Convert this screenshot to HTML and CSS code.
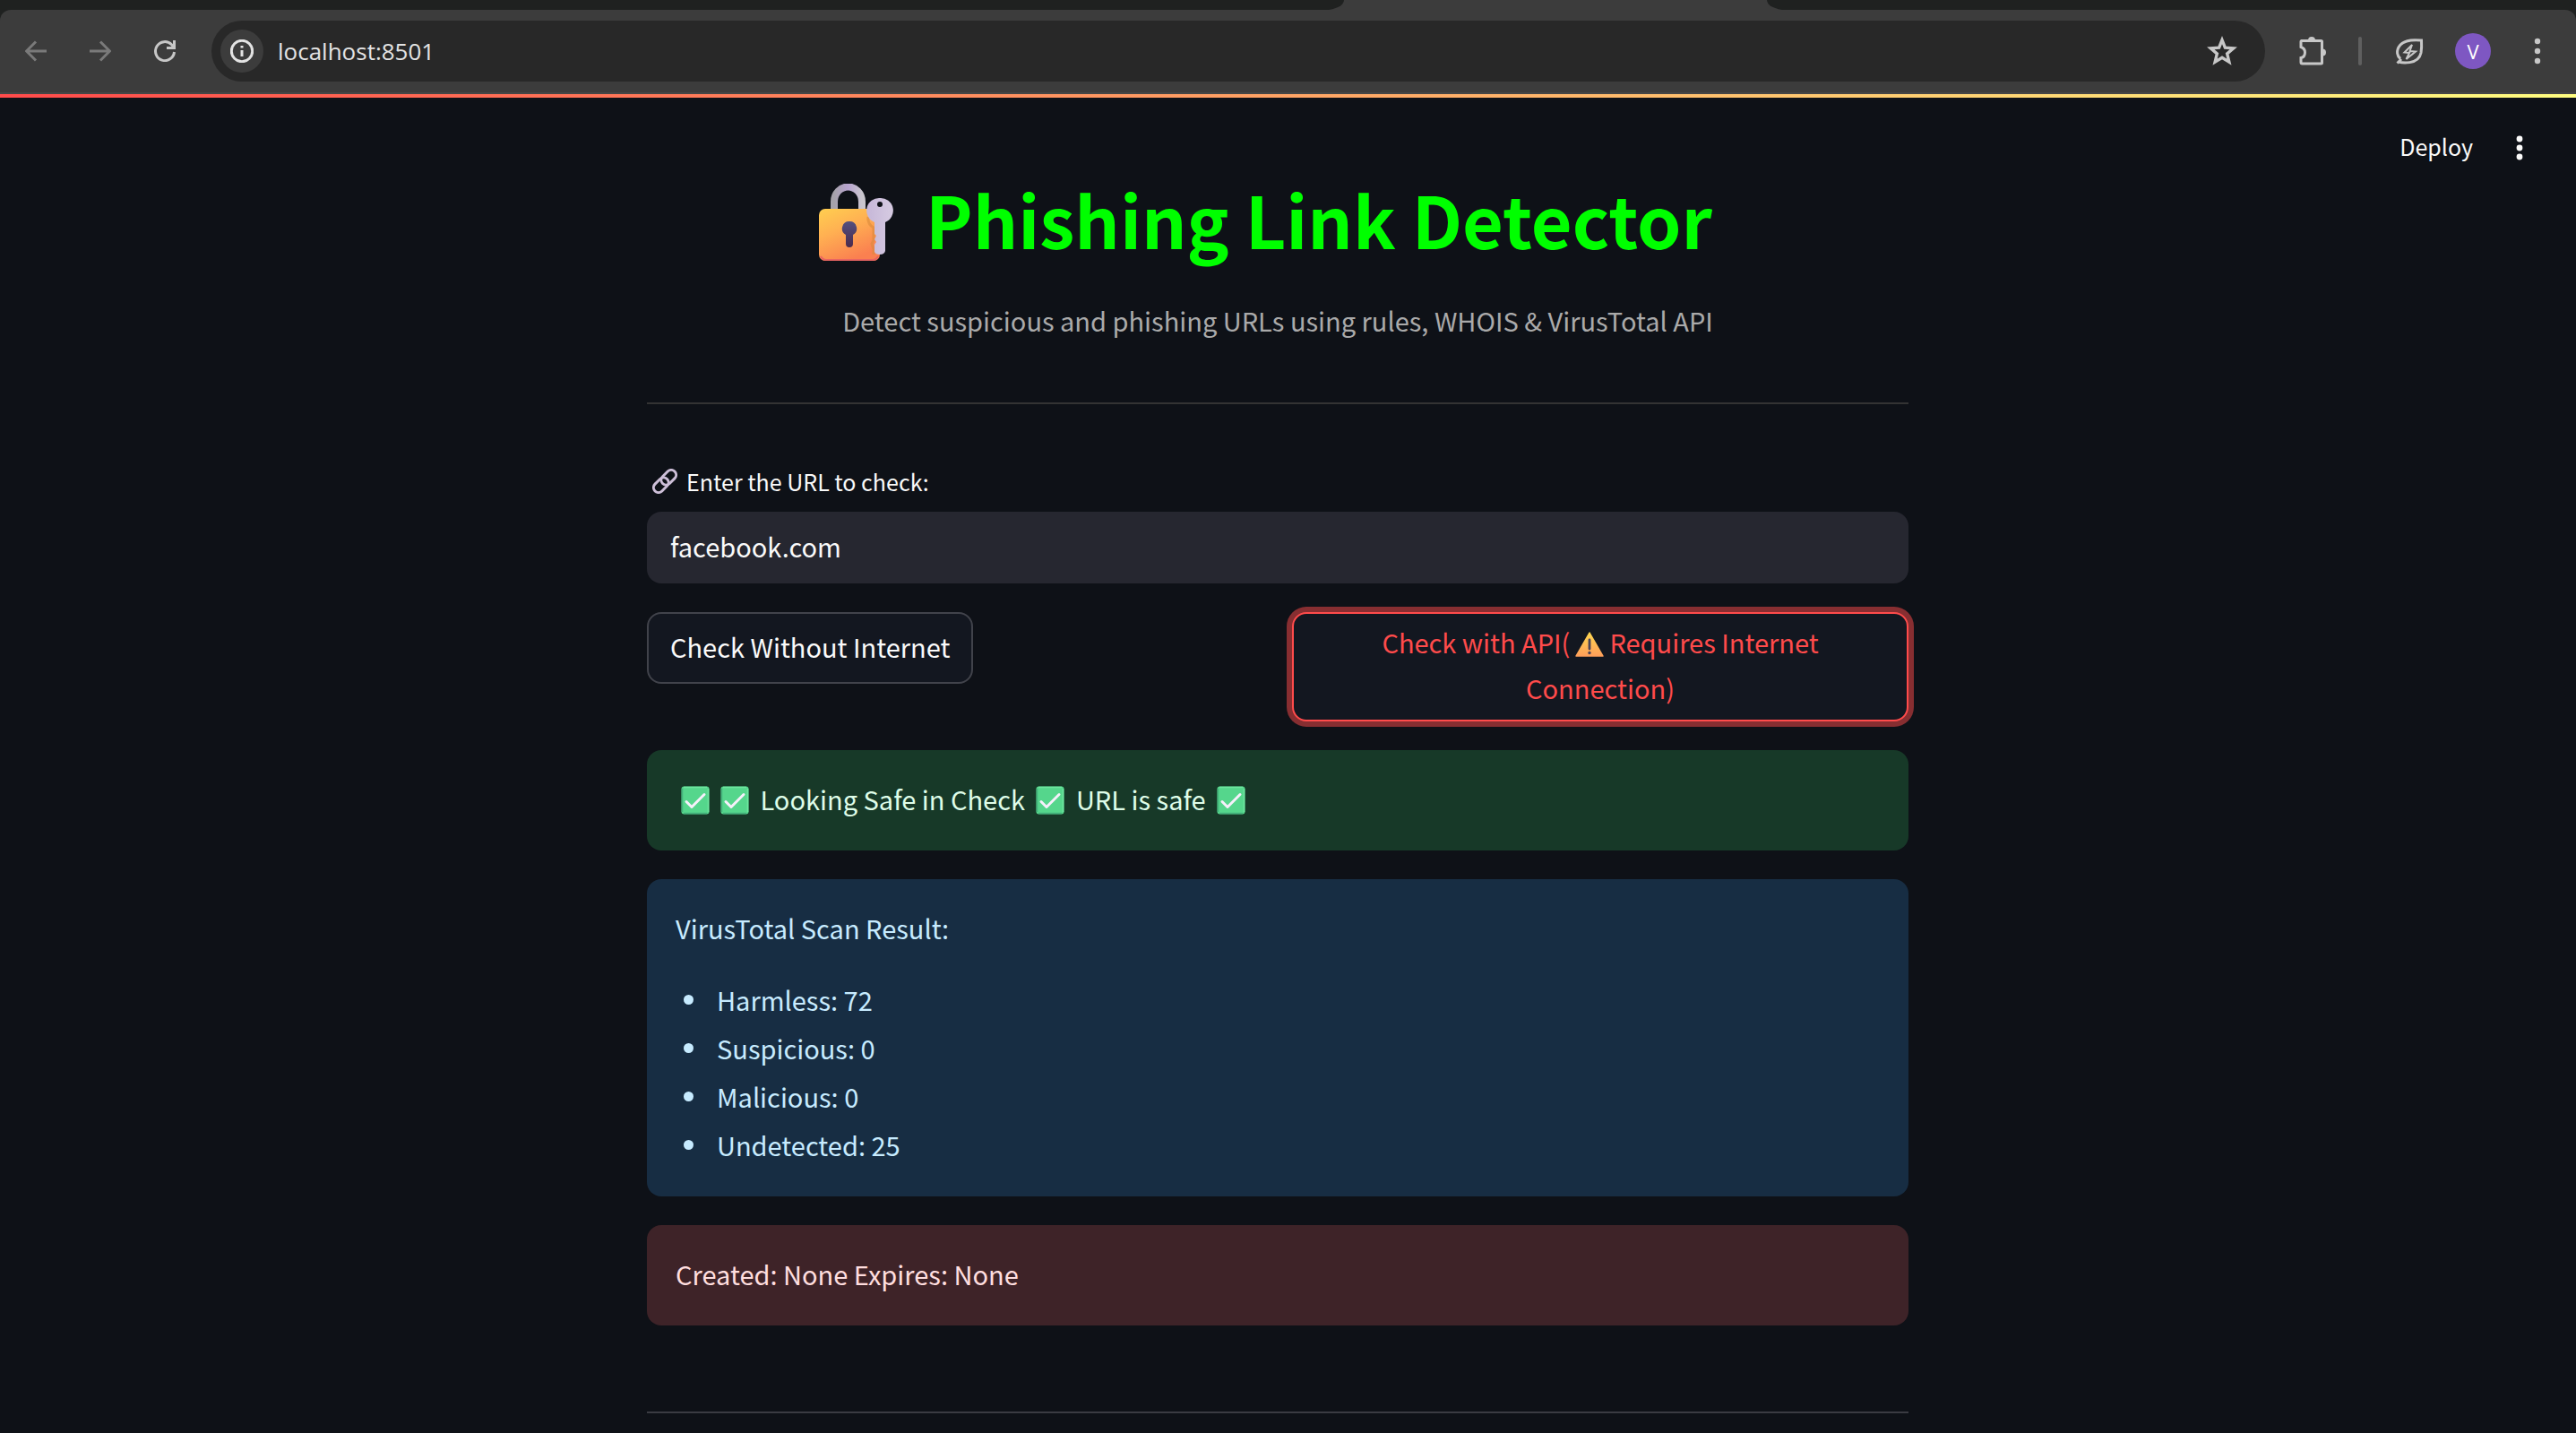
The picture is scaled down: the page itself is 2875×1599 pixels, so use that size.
FILE: index.html
```html
<!DOCTYPE html>
<html lang="en">
<head>
<meta charset="utf-8">
<title>Phishing Link Detector</title>
<link rel="stylesheet" href="styles.css">
</head>
<body>
<svg class="defs" aria-hidden="true">
  <defs>
    <linearGradient id="gold" x1="0" y1="0" x2="0.5" y2="1"><stop offset="0" stop-color="#ffcf50"/><stop offset="0.45" stop-color="#ffb052"/><stop offset="1" stop-color="#fa8050"/></linearGradient>
    <linearGradient id="steel" x1="0" y1="0" x2="1" y2="0"><stop offset="0" stop-color="#a6a2aa"/><stop offset="0.5" stop-color="#b7a3cf"/><stop offset="1" stop-color="#c9c6cd"/></linearGradient>
    <linearGradient id="hole" x1="0" y1="0" x2="0" y2="1"><stop offset="0" stop-color="#54507f"/><stop offset="1" stop-color="#4a2a4c"/></linearGradient>
    <linearGradient id="alert" x1="0" y1="0" x2="0" y2="1"><stop offset="0" stop-color="#ffd750"/><stop offset="1" stop-color="#ff9f5a"/></linearGradient>
    <linearGradient id="key" x1="0" y1="0" x2="1" y2="0"><stop offset="0" stop-color="#c6b7d8"/><stop offset="1" stop-color="#d6cbe2"/></linearGradient>
    <symbol id="check" viewBox="0 0 32 32">
      <rect x="0.500" y="0.500" width="31" height="31" rx="3" fill="#55d68c"/>
      <path d="M3 1.500H29M30.500 3V29" stroke="#6fe6a0" stroke-width="1.500" fill="none"/>
      <path d="M1.500 3V29M3 30.500H29" stroke="#44b27c" stroke-width="1.500" fill="none"/>
      <path d="M6 17.500L12 23.500L26 9.500" stroke="#f6f0fb" stroke-width="3" fill="none" stroke-linecap="round" stroke-linejoin="round"/>
    </symbol>
  </defs>
</svg>

<header class="browser">
  <div class="tabstrip"><span class="tabs-left"></span><span class="tab-active"></span><span class="tabs-right"></span></div>
  <div class="toolbar">
    <nav class="nav" aria-label="Navigation">
      <button class="icon-btn dim" aria-label="Back"><svg viewBox="0 0 24 24"><path d="M24 12H3M12 1.500L1.500 12L12 22.500"/></svg></button>
      <button class="icon-btn dim" aria-label="Forward"><svg viewBox="0 0 24 24"><path d="M0 12H21M12 1.500L22.500 12L12 22.500"/></svg></button>
      <button class="icon-btn" aria-label="Reload"><svg viewBox="0 0 24 24"><path d="M22.500 13A10.500 10.500 0 1 1 19.500 4.700L22 7.500M22.500 0V8.500H14"/></svg></button>
    </nav>
    <div class="omnibox">
      <button class="site-info" aria-label="Site information"><svg viewBox="0 0 26 26"><circle cx="13" cy="13" r="11.700"/><path d="M13 12V19M13 7V9.500"/></svg></button>
      <input class="address" type="text" value="localhost:8501" aria-label="Address">
      <button class="icon-btn star" aria-label="Bookmark"><svg viewBox="0 0 32 32"><path d="M16 5L19 12.600L27.300 13.200L21 18.600L23 26.800L16 22.500L9 26.800L11 18.600L4.700 13.200L13 12.600Z"/></svg></button>
    </div>
    <div class="actions">
      <button class="icon-btn" aria-label="Extensions"><svg viewBox="0 0 34 34"><path d="M4 5.500H26.500Q27.500 5.500 27.500 6.500V30Q27.500 31 26.500 31H5.500Q4 31 4 29.500V24.500C7 24 8.500 21.500 8.500 18.500S7 13.500 4 12.500V6.500Q4 5.500 5 5.500Z"/><path class="solid" d="M12 5A4 4 0 0 1 20 5ZM28 14.500A4 4 0 0 1 28 22.500Z"/></svg></button>
      <span class="sep"></span>
      <button class="icon-btn" aria-label="Energy saver"><svg viewBox="0 0 34 34"><path d="M5 29C8 30 27 33 30 19Q31 13 30.500 5C24 4.500 13 3.500 7 10C1 17 4 23 7 25.500M3.500 30.500L8 26"/><path class="thin" d="M20 10L11.500 18.500L17 19L13.500 26L24 17.500L17.500 17Z"/></svg></button>
      <button class="avatar" aria-label="Profile">V</button>
      <button class="icon-btn menu" aria-label="Browser menu"><svg viewBox="0 0 8 30"><circle cx="4" cy="4" r="3.200"/><circle cx="4" cy="15" r="3.200"/><circle cx="4" cy="26" r="3.200"/></svg></button>
    </div>
  </div>
</header>

<div class="app">
  <div class="decoration"></div>
  <div class="app-bar">
    <button class="deploy">Deploy</button>
    <button class="app-menu" aria-label="App menu"><svg viewBox="0 0 8 28"><circle cx="4" cy="4" r="3.400"/><circle cx="4" cy="14" r="3.400"/><circle cx="4" cy="24" r="3.400"/></svg></button>
  </div>

  <div class="scroller">
    <main class="content">
      <h1 class="title">
        <svg class="lock" viewBox="0 0 84 88" role="img" aria-label="Locked with key">
          <path d="M18 36V20A15 16 0 0 1 49 20V36" fill="none" stroke="url(#steel)" stroke-width="8"/>
          <rect x="1" y="28" width="68" height="58" rx="7" fill="url(#gold)"/>
          <path d="M3 81Q5 85 9 85H61Q65 85 67 81" fill="none" stroke="#e96562" stroke-width="2"/>
          <path d="M35 42A8 8 0 0 0 31 57V67A4 4 0 0 0 39 67V57A8 8 0 0 0 35 42Z" fill="url(#hole)"/>
          <path d="M56 37Q55 45 62 49V63L60 67L62 73V79" fill="none" stroke="#d98a3c" stroke-width="3" opacity="0.600"/>
          <path fill-rule="evenodd" d="M69 16A14 14 0 0 0 63 43V56L65 58L63 62L65 65L63 68V76Q64 79 69 79Q74 79 75 75V43A14 14 0 0 0 69 16ZM69 20A3 3 0 1 1 69 26A3 3 0 0 1 69 20Z" fill="url(#key)"/>
        </svg>
        <span>Phishing Link Detector</span>
      </h1>
      <p class="subtitle">Detect suspicious and phishing URLs using rules, WHOIS &amp; VirusTotal API</p>
      <hr class="rule">

      <form class="form">
        <label class="field-label" for="url">
          <svg class="link-icon" viewBox="0 0 28 28" aria-hidden="true"><g fill="none" stroke="#cdbfd8" stroke-width="3" transform="rotate(-45 14 14)"><rect x="-1.500" y="8.500" width="19" height="11" rx="5.500"/><rect x="10.500" y="8.500" width="19" height="11" rx="5.500"/></g></svg>
          <span>Enter the URL to check:</span>
        </label>
        <input class="field" id="url" type="text" value="facebook.com">
        <div class="columns">
          <div><button class="btn" type="button">Check Without Internet</button></div>
          <div><button class="btn btn-focus" type="button">Check with API(<svg class="warn" viewBox="0 0 32 28" role="img" aria-label="Warning"><path d="M16 1L31 27H1Z" fill="url(#alert)" stroke="url(#alert)" stroke-width="1.500" stroke-linejoin="round"/><path d="M16 9V19" stroke="#4a4358" stroke-width="2.800" stroke-linecap="round"/><circle cx="16" cy="23.500" r="1.700" fill="#4a4358"/></svg>Requires Internet Connection)</button></div>
        </div>
      </form>

      <section class="alert success" role="status">
        <svg class="tick" role="img" aria-label="OK"><use href="#check"/></svg><svg class="tick" role="img" aria-label="OK"><use href="#check"/></svg> Looking Safe in Check <svg class="tick" role="img" aria-label="OK"><use href="#check"/></svg> URL is safe <svg class="tick" role="img" aria-label="OK"><use href="#check"/></svg>
      </section>
      <section class="alert info">
        <p>VirusTotal Scan Result:</p>
        <ul class="results">
          <li>Harmless: 72</li>
          <li>Suspicious: 0</li>
          <li>Malicious: 0</li>
          <li>Undetected: 25</li>
        </ul>
      </section>
      <section class="alert error">Created: None Expires: None</section>
      <hr class="rule rule-end">
    </main>
  </div>
</div>
</body>
</html>
```
FILE: styles.css
```css
* { box-sizing: border-box; }

:root {
  --sans: "Noto Sans CJK JP", "Noto Sans CJK SC", sans-serif;
  --text: #fafafa;
}

body {
  margin: 0;
  min-height: 100vh;
  background: #0e1117;
  color: var(--text);
  font-family: var(--sans);
  font-size: 29px;
  line-height: 48px;
  overflow: hidden;
}

button, input { font: inherit; color: inherit; margin: 0; }
button { background: none; border: 0; padding: 0; cursor: pointer; }
p, h1, ul { margin: 0; padding: 0; }
svg { display: block; }
.defs { position: absolute; width: 0; height: 0; }

/* Browser window */
.browser { background: #1f2120; }
.tabstrip { display: flex; height: 11px; background: #3c3c3c; }
.tabs-left, .tabs-right { background: #1f2120; }
.tabs-left { flex: 1500; border-bottom-right-radius: 21px 11px; }
.tab-active { flex: 472; }
.tabs-right { flex: 903; border-bottom-left-radius: 21px 11px; }

.toolbar {
  display: flex;
  align-items: center;
  height: 94px;
  padding: 0 39px 0 28px;
  background: #3c3c3c;
  border-bottom: 2px solid #464646;
  border-radius: 12px 12px 0 0;
  color: #c7c7c7;
}
.nav { display: flex; gap: 48px; margin-right: 40px; }
.icon-btn svg { width: 24px; height: 24px; fill: none; stroke: currentColor; stroke-width: 3; }
.icon-btn.dim { color: #7a7a7a; }

.omnibox {
  display: flex;
  flex: 1;
  align-items: center;
  height: 68px;
  padding: 0 30px 0 10px;
  border-radius: 34px;
  background: #282828;
}
.site-info {
  display: grid;
  place-items: center;
  width: 48px;
  height: 48px;
  border-radius: 50%;
  background: #3c3c3c;
  color: #e3e3e3;
}
.site-info svg { width: 26px; height: 26px; fill: none; stroke: currentColor; stroke-width: 3; }
.address {
  flex: 1;
  margin-left: 16px;
  padding: 0;
  border: 0;
  background: none;
  color: #e3e3e3;
  font: 26px/36px "Open Sans", "Noto Sans", sans-serif;
}
.icon-btn.star svg { width: 36px; height: 36px; }

.actions { display: flex; align-items: center; margin-left: 36px; }
.actions .icon-btn svg { width: 34px; height: 34px; }
.actions .solid { fill: currentColor; stroke: none; }
.actions .thin { stroke-width: 2; fill: none; }
.sep { width: 4px; height: 32px; margin: 0 36px 0 34px; border-radius: 2px; background: #5f5f5f; }
.avatar {
  width: 40px;
  height: 40px;
  margin: 0 48px 0 34px;
  border-radius: 50%;
  background: #7e57c2;
  color: #fff;
  font: 22px/40px "Open Sans", sans-serif;
}
.actions .menu svg { width: 8px; height: 30px; fill: currentColor; stroke: none; }

/* App chrome */
.decoration { height: 4px; background: linear-gradient(90deg, #ff4b4b, #fffd80); }
.app-bar {
  display: flex;
  justify-content: flex-end;
  align-items: center;
  gap: 48px;
  height: 60px;
  margin-top: 26px;
  padding-right: 59px;
}
.deploy { padding-bottom: 4px; font-size: 25px; }
.app-menu svg { width: 8px; height: 28px; fill: currentColor; }

/* Page column, centred beside the scroll gutter */
.scroller { padding: 0 23px 0 0; }
.content {
  display: flex;
  flex-direction: column;
  width: 1408px;
  max-width: calc(100% - 64px);
  margin: 0 auto;
}
.title {
  display: flex;
  justify-content: center;
  align-items: flex-end;
  gap: 36px;
  padding-right: 28px;
  color: #0f0;
  font-size: 79px;
  font-weight: 700;
  line-height: 98px;
}
.lock { width: 84px; height: 88px; }
.subtitle { margin-top: 40px; color: #aaa; text-align: center; }
.rule { width: 100%; height: 2px; margin: 68px 0 62px; border: 0; background: #333; }

.form { display: flex; flex-direction: column; }
.field-label {
  display: flex;
  align-items: center;
  gap: 10px;
  margin-bottom: 10px;
  padding-left: 6px;
  font-size: 25px;
}
.link-icon { width: 28px; height: 28px; }
.field {
  height: 80px;
  padding: 0 26px 4px;
  border: 0;
  border-radius: 16px;
  background: #262730;
}
.columns { display: grid; grid-template-columns: 1fr 1fr; gap: 32px; margin: 32px 0; }
.btn {
  min-height: 80px;
  padding: 6px 24px 10px;
  border: 2px solid #41434b;
  border-radius: 16px;
  background: #131720;
  line-height: 51px;
}
.btn-focus {
  width: 100%;
  padding: 6px 96px 10px;
  border-color: #ff4b4b;
  box-shadow: 0 0 0 6px rgba(255, 75, 75, 0.5);
  color: #ff4b4b;
}
.warn { display: inline-block; width: 32px; height: 28px; margin: 0 6px; vertical-align: -4px; }

.alert { margin-bottom: 32px; padding: 30px 32px 34px; border-radius: 16px; }
.success { background: #173928; color: #dffde9; }
.info { background: #172d43; color: #c7ebff; }
.error { background: #3e2328; color: #ffdedf; }
.tick { display: inline-block; width: 32px; height: 32px; margin: 0 6px; vertical-align: -5px; }
.results {
  display: grid;
  gap: 6px;
  margin-top: 32px;
  padding-left: 9px;
  list-style: none;
}
.results li { display: flex; align-items: center; gap: 26px; }
.results li::before {
  content: "";
  width: 11px;
  height: 11px;
  border-radius: 50%;
  background: currentColor;
}
.rule-end { margin: 64px 0 0; background: #3a3b42; }
```
